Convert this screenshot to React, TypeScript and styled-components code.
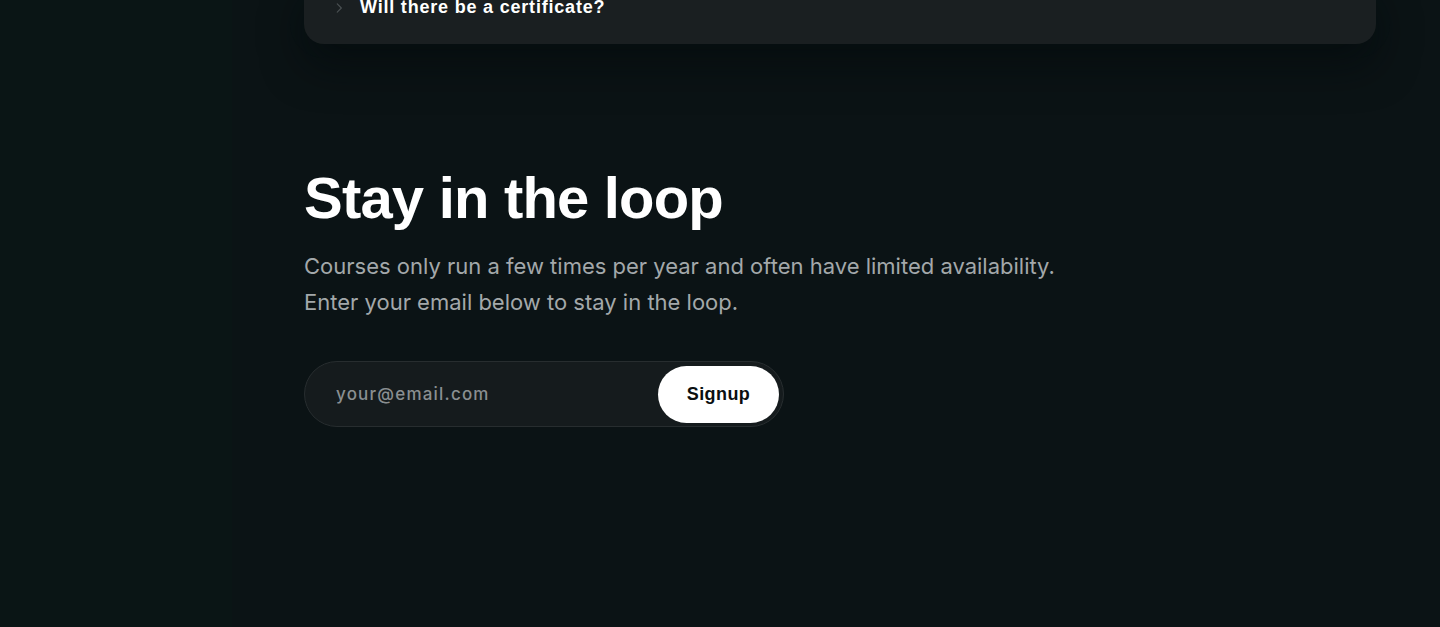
import React from 'react';
import styled, { createGlobalStyle } from 'styled-components';

const GlobalStyle = createGlobalStyle`
    * {
        box-sizing: border-box;
    }
    body {
        margin: 0;
        background: #0b1315;
        font-family: 'Inter', 'Liberation Sans', sans-serif;
        -webkit-font-smoothing: antialiased;
    }
`;

const Page = styled.div`
    display: flex;
    height: 627px;
    overflow: hidden;
    background: #0b1315;
`;

const Side = styled.aside`
    width: 232px;
    flex-shrink: 0;
    background: #0a1515;
`;

const Main = styled.main`
    flex: 1;
    padding: 0 64px 0 72px;
    display: flex;
    flex-direction: column;
`;

const FaqCard = styled.div`
    margin-top: -25px;
    background: #1a1f21;
    border-radius: 20px;
    padding: 22px 28px 26px 28px;
    box-shadow: 0 22px 40px rgba(3, 10, 11, 0.55), 0 0 0 14px rgba(10, 20, 22, 0.35);
`;

const FaqRow = styled.div`
    display: flex;
    align-items: center;
    gap: 14px;
    color: #ffffff;
    font-family: 'Liberation Sans', Arial, sans-serif;
    font-size: 18px;
    font-weight: 700;
    letter-spacing: 0.8px;
`;

const Chevron = styled.svg`
    width: 14px;
    height: 14px;
    color: #4a5052;
    flex-shrink: 0;
`;

const Loop = styled.section`
    margin-top: 122px;
    display: flex;
    flex-direction: column;
`;

const Title = styled.h2`
    margin: 0;
    color: #ffffff;
    font-family: 'Liberation Sans', Arial, sans-serif;
    font-size: 58px;
    font-weight: 700;
    line-height: 64px;
    letter-spacing: -0.8px;
`;

const Lead = styled.p`
    margin: 18px 0 0 0;
    color: #a3a8aa;
    font-size: 22px;
    font-weight: 400;
    line-height: 36px;
    letter-spacing: 0px;
`;

const SignupForm = styled.form`
    margin-top: 41px;
    width: 480px;
    height: 66px;
    display: flex;
    align-items: center;
    padding: 4px;
    border-radius: 999px;
    background: #151b1d;
    border: 1px solid #272d2f;
`;

const EmailInput = styled.input`
    flex: 1;
    min-width: 0;
    height: 100%;
    background: transparent;
    border: none;
    outline: none;
    padding: 0 0 0 27px;
    color: #ffffff;
    font-family: 'Inter', 'Liberation Sans', sans-serif;
    font-size: 17px;
    font-weight: 500;
    letter-spacing: 1.2px;
    &::placeholder {
        color: #8a8f91;
    }
`;

const SignupButton = styled.button`
    width: 121px;
    height: 57px;
    border: none;
    border-radius: 999px;
    background: #ffffff;
    color: #0b0f10;
    font-family: 'Liberation Sans', Arial, sans-serif;
    font-size: 18px;
    font-weight: 700;
    letter-spacing: 0.4px;
    cursor: pointer;
`;

const App = () => {
    return (
        <>
            <GlobalStyle />
            <Page>
                <Side />
                <Main>
                    <FaqCard>
                        <FaqRow>
                            <Chevron viewBox="0 0 24 24" fill="none" stroke="currentColor" strokeWidth="2" strokeLinecap="round" strokeLinejoin="round">
                                <path d="M9 5l7 7-7 7" />
                            </Chevron>
                            Will there be a certificate?
                        </FaqRow>
                    </FaqCard>
                    <Loop>
                        <Title>Stay in the loop</Title>
                        <Lead>
                            Courses only run a few times per year and often have limited availability.
                            <br />
                            Enter your email below to stay in the loop.
                        </Lead>
                        <SignupForm onSubmit={(e) => e.preventDefault()}>
                            <EmailInput type="email" placeholder="your@email.com" />
                            <SignupButton type="submit">Signup</SignupButton>
                        </SignupForm>
                    </Loop>
                </Main>
            </Page>
        </>
    );
};

export default App;
